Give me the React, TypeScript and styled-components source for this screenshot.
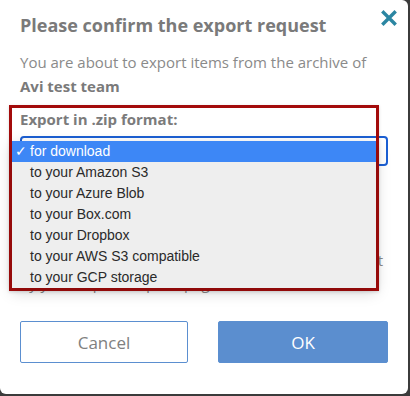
import React from "react";
import styled, { createGlobalStyle } from "styled-components";

const Global = createGlobalStyle`
  html, body { margin: 0; padding: 0; background: #3b3b3b; }
  body { width: 410px; height: 396px; overflow: hidden; }
`;

const Modal = styled.div`
  position: relative;
  box-sizing: border-box;
  width: 408px;
  height: 394px;
  background: #ffffff;
  border-radius: 0 6px 6px 6px;
  padding: 13px 20px 0 20px;
  display: flex;
  flex-direction: column;
  font-family: "Open Sans", "Liberation Sans", sans-serif;
  color: #858585;
`;

const Header = styled.div`
  display: flex;
  justify-content: space-between;
  align-items: flex-start;
`;

const Title = styled.h1`
  margin: 0;
  font-size: 18px;
  line-height: 24px;
  font-weight: 700;
  color: #7a7a7a;
`;

const Close = styled.button`
  border: 0;
  background: none;
  padding: 0;
  margin: -3px -9px 0 0;
  width: 16px;
  height: 16px;
  display: flex;
  cursor: pointer;
`;

const Intro = styled.p`
  margin: 13px 0 0 0;
  font-size: 15px;
  line-height: 24px;
  color: #8a8a8a;
`;

const Strong = styled.strong`
  font-weight: 700;
  color: #7a7a7a;
`;

const Label = styled.div`
  margin-top: 11px;
  font-size: 15px;
  line-height: 20px;
  font-weight: 700;
  color: #7b7b7b;
`;

const Select = styled.div`
  box-sizing: border-box;
  margin-top: 7px;
  height: 30px;
  width: 368px;
  border: 2px solid #1b5fd3;
  border-radius: 4px;
  background: #fff;
`;

const Help = styled.div`
  margin: 60px 0 0 0;
  width: 363px;
  font-size: 15px;
  line-height: 23px;
  color: #8a8a8a;
`;

const HelpLine = styled.span<{ $fill?: boolean }>`
  display: block;
  white-space: nowrap;
  text-align: ${(p) => (p.$fill ? "justify" : "left")};
  text-align-last: ${(p) => (p.$fill ? "justify" : "left")};
`;

const Buttons = styled.div`
  margin-top: 26px;
  display: flex;
  gap: 30px;
`;

const Button = styled.button<{ $primary?: boolean }>`
  box-sizing: border-box;
  width: ${(p) => (p.$primary ? 170 : 168)}px;
  height: 42px;
  border-radius: 2px;
  border: 1px solid #5b8fd0;
  background: ${(p) => (p.$primary ? "#5b8ecf" : "#ffffff")};
  color: ${(p) => (p.$primary ? "#ffffff" : "#808080")};
  font-family: "Open Sans", "Liberation Sans", sans-serif;
  font-size: 17px;
  cursor: pointer;
`;

const Annotation = styled.div`
  position: absolute;
  left: 9px;
  top: 105px;
  width: 370px;
  height: 186px;
  box-sizing: border-box;
  border: 3px solid #a30b0b;
  pointer-events: none;
  box-shadow: 0 1px 3px rgba(0, 0, 0, 0.15);
`;

const Listbox = styled.ul`
  position: absolute;
  left: 12px;
  top: 141px;
  width: 364px;
  margin: 0;
  padding: 0;
  list-style: none;
  background: #eeeeee;
  box-shadow: 0 4px 14px rgba(0, 0, 0, 0.18);
  font-family: "Liberation Sans", Arial, sans-serif;
  font-size: 14px;
`;

const Option = styled.li<{ $selected?: boolean }>`
  position: relative;
  height: 21px;
  line-height: 21px;
  padding-left: 18px;
  background: ${(p) => (p.$selected ? "#3d87f6" : "transparent")};
  color: ${(p) => (p.$selected ? "#ffffff" : "#2a2a2a")};
`;

const Check = styled.span`
  position: absolute;
  left: 3px;
  top: 0;
`;

const options = [
  "for download",
  "to your Amazon S3",
  "to your Azure Blob",
  "to your Box.com",
  "to your Dropbox",
  "to your AWS S3 compatible",
  "to your GCP storage",
];

export default function App() {
  return (
    <>
      <Global />
      <Modal>
        <Header>
          <Title>Please confirm the export request</Title>
          <Close aria-label="Close">
            <svg width="16" height="16" viewBox="0 0 16 16">
              <path d="M2.5 2.5 L13.5 13.5 M13.5 2.5 L2.5 13.5" stroke="#2b86a2" strokeWidth="3.4" strokeLinecap="square" />
            </svg>
          </Close>
        </Header>
        <Intro>
          You are about to export items from the archive of
          <br />
          <Strong>Avi test team</Strong>
        </Intro>
        <Label>Export in .zip format:</Label>
        <Select />
        <Help>
          <HelpLine>Once the export is ready, we will notify you</HelpLine>
          <HelpLine $fill>and send you a link to download the export</HelpLine>
          <HelpLine>by your export request page.</HelpLine>
        </Help>
        <Buttons>
          <Button>Cancel</Button>
          <Button $primary>OK</Button>
        </Buttons>
        <Annotation />
        <Listbox>
          {options.map((o, i) => (
            <Option key={o} $selected={i === 0}>
              {i === 0 && <Check>✓</Check>}
              {o}
            </Option>
          ))}
        </Listbox>
      </Modal>
    </>
  );
}
